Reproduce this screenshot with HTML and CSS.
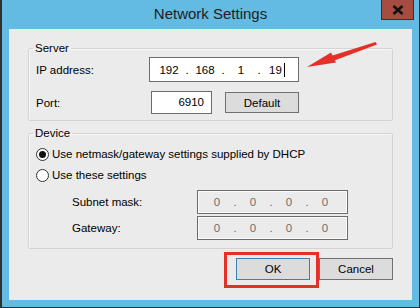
FILE: index.html
```html
<!DOCTYPE html>
<html>
<head>
<meta charset="utf-8">
<link rel="stylesheet" href="styles.css">
</head>
<body>
<div class="window">
  <div class="titlebar">
    <span class="title">Network Settings</span>
    <div class="close">
      <svg width="12" height="10" viewBox="0 0 12 10"><path d="M1.5 1 L10.5 9 M10.5 1 L1.5 9" stroke="#111" stroke-width="2.6" fill="none"/></svg>
    </div>
  </div>
  <div class="panel">
    <fieldset class="group server">
      <legend>Server</legend>
      <div class="row row-ip">
        <span class="label">IP address:</span>
        <div class="ipfield">
          <span class="seg">192</span><span class="dot">.</span><span class="seg">168</span><span class="dot">.</span><span class="seg">1</span><span class="dot">.</span><span class="seg">19<span class="caret"></span></span>
        </div>
      </div>
      <div class="row row-port">
        <span class="label port-label">Port:</span>
        <div class="portfield">6910</div>
        <button class="btn default">Default</button>
      </div>
    </fieldset>
    <fieldset class="group device">
      <legend>Device</legend>
      <div class="radio-row"><span class="radio checked"></span><span>Use netmask/gateway settings supplied by DHCP</span></div>
      <div class="radio-row second"><span class="radio"></span><span>Use these settings</span></div>
      <div class="row sub-row first">
        <span class="sublabel">Subnet mask:</span>
        <div class="ipfield disabled">
          <span class="seg">0</span><span class="dot">.</span><span class="seg">0</span><span class="dot">.</span><span class="seg">0</span><span class="dot">.</span><span class="seg">0</span>
        </div>
      </div>
      <div class="row sub-row">
        <span class="sublabel">Gateway:</span>
        <div class="ipfield disabled">
          <span class="seg">0</span><span class="dot">.</span><span class="seg">0</span><span class="dot">.</span><span class="seg">0</span><span class="dot">.</span><span class="seg">0</span>
        </div>
      </div>
    </fieldset>
    <div class="actions">
      <div class="ok-wrap">
        <button class="btn ok">OK</button>
        <span class="highlight"></span>
      </div>
      <button class="btn">Cancel</button>
    </div>
  </div>
  <svg class="arrow" width="420" height="308" viewBox="0 0 420 308">
    <path d="M375.5 42 L377 44.5 L333 61 L331 56 Z" fill="#e5302a"/>
    <polygon points="307,67 336,62.5 331,52.5" fill="#e5302a"/>
  </svg>
</div>
</body>
</html>
```

FILE: styles.css
```css
html, body {
  margin: 0;
  padding: 0;
}
body {
  font-family: "Liberation Sans", Arial, sans-serif;
  font-size: 11.5px;
  color: #000;
  background: #ffffff;
}
.window {
  position: relative;
  box-sizing: border-box;
  width: 420px;
  height: 308px;
  background: #63bae2;
  border-left: 2px solid #2f2f2f;
  border-right: 1px solid #2f2f2f;
  border-bottom: 1px solid #2f2f2f;
  padding: 0 7px 7px 7px;
  display: flex;
  flex-direction: column;
}
.titlebar {
  box-sizing: border-box;
  height: 29px;
  flex: none;
  display: flex;
  align-items: center;
  justify-content: center;
  font-size: 15px;
  color: #1e1e1e;
  padding-bottom: 2px;
}
.close {
  position: absolute;
  top: 0;
  left: 379px;
  width: 33px;
  height: 20px;
  box-sizing: border-box;
  background: #a64c40;
  border: 1px solid #4a2a25;
  border-top: none;
  display: flex;
  align-items: center;
  justify-content: center;
}
.panel {
  flex: 1;
  background: #ebebeb;
  padding: 12px 19px 0 19px;
}
.group {
  margin: 0;
  padding: 2px 6px 6px 7px;
  border: 1px solid #d3d3d3;
  border-radius: 2px;
  min-width: 0;
  box-shadow: inset 1px 1px 0 #f8f8f8;
}
.group legend {
  padding: 0 2px;
  margin-left: -3px;
  line-height: 14px;
  font-size: 11.5px;
}
.device {
  margin-top: 5px;
  padding: 7px 6px 8px 7px;
}
.row {
  display: flex;
  align-items: center;
}
.row-ip {
  height: 25px;
}
.row-port {
  height: 23px;
  margin-top: 9px;
}
.label {
  width: 113px;
  flex: none;
}
.port-label {
  width: 115px;
}
.ipfield {
  box-sizing: border-box;
  width: 150px;
  height: 25px;
  flex: none;
  border: 1px solid #6b6b6b;
  background: #fff;
  display: flex;
  align-items: center;
  padding-left: 5px;
}
.seg {
  width: 28px;
  text-align: center;
  display: flex;
  justify-content: center;
  align-items: center;
}
.dot {
  width: 8px;
  text-align: center;
}
.caret {
  display: inline-block;
  width: 1px;
  height: 14px;
  background: #000;
  margin-left: 2px;
}
.disabled {
  width: 151px;
  height: 24px;
  background: #ebebeb;
  box-shadow: inset 0 0 0 1px #fdfdfd;
  color: #6d6d6d;
}
.portfield {
  box-sizing: border-box;
  width: 61px;
  height: 23px;
  flex: none;
  border: 1px solid #6b6b6b;
  background: #fff;
  text-align: right;
  padding-right: 7px;
  line-height: 21px;
}
.btn {
  box-sizing: border-box;
  font: inherit;
  color: #000;
  background: #dcdcdc;
  border: 1px solid #707070;
  border-radius: 0;
  padding: 0;
  height: 22px;
  width: 74px;
  flex: none;
}
.default {
  margin-left: 13px;
  height: 21px;
}
.radio-row {
  display: flex;
  align-items: center;
  gap: 3px;
  height: 14px;
}
.radio-row.second {
  margin-top: 7px;
}
.radio {
  box-sizing: border-box;
  width: 13px;
  height: 13px;
  border: 1px solid #333;
  border-radius: 50%;
  background: #fff;
  display: flex;
  align-items: center;
  justify-content: center;
}
.radio.checked::after {
  content: "";
  width: 7px;
  height: 7px;
  border-radius: 50%;
  background: #111;
}
.sub-row {
  height: 24px;
  margin-top: 2px;
}
.sub-row.first {
  margin-top: 8px;
}
.sublabel {
  margin-left: 36px;
  width: 125px;
  flex: none;
}
.actions {
  display: flex;
  justify-content: flex-end;
  gap: 9px;
  margin-top: 9px;
}
.ok-wrap {
  position: relative;
  display: flex;
}
.ok {
  border-color: #3c7fb1;
}
.highlight {
  position: absolute;
  left: -12px;
  top: -6px;
  width: 95px;
  height: 36px;
  box-sizing: border-box;
  border: 3px solid #e5302a;
  pointer-events: none;
}
.arrow {
  position: absolute;
  left: -2px;
  top: 0;
  pointer-events: none;
}
```
